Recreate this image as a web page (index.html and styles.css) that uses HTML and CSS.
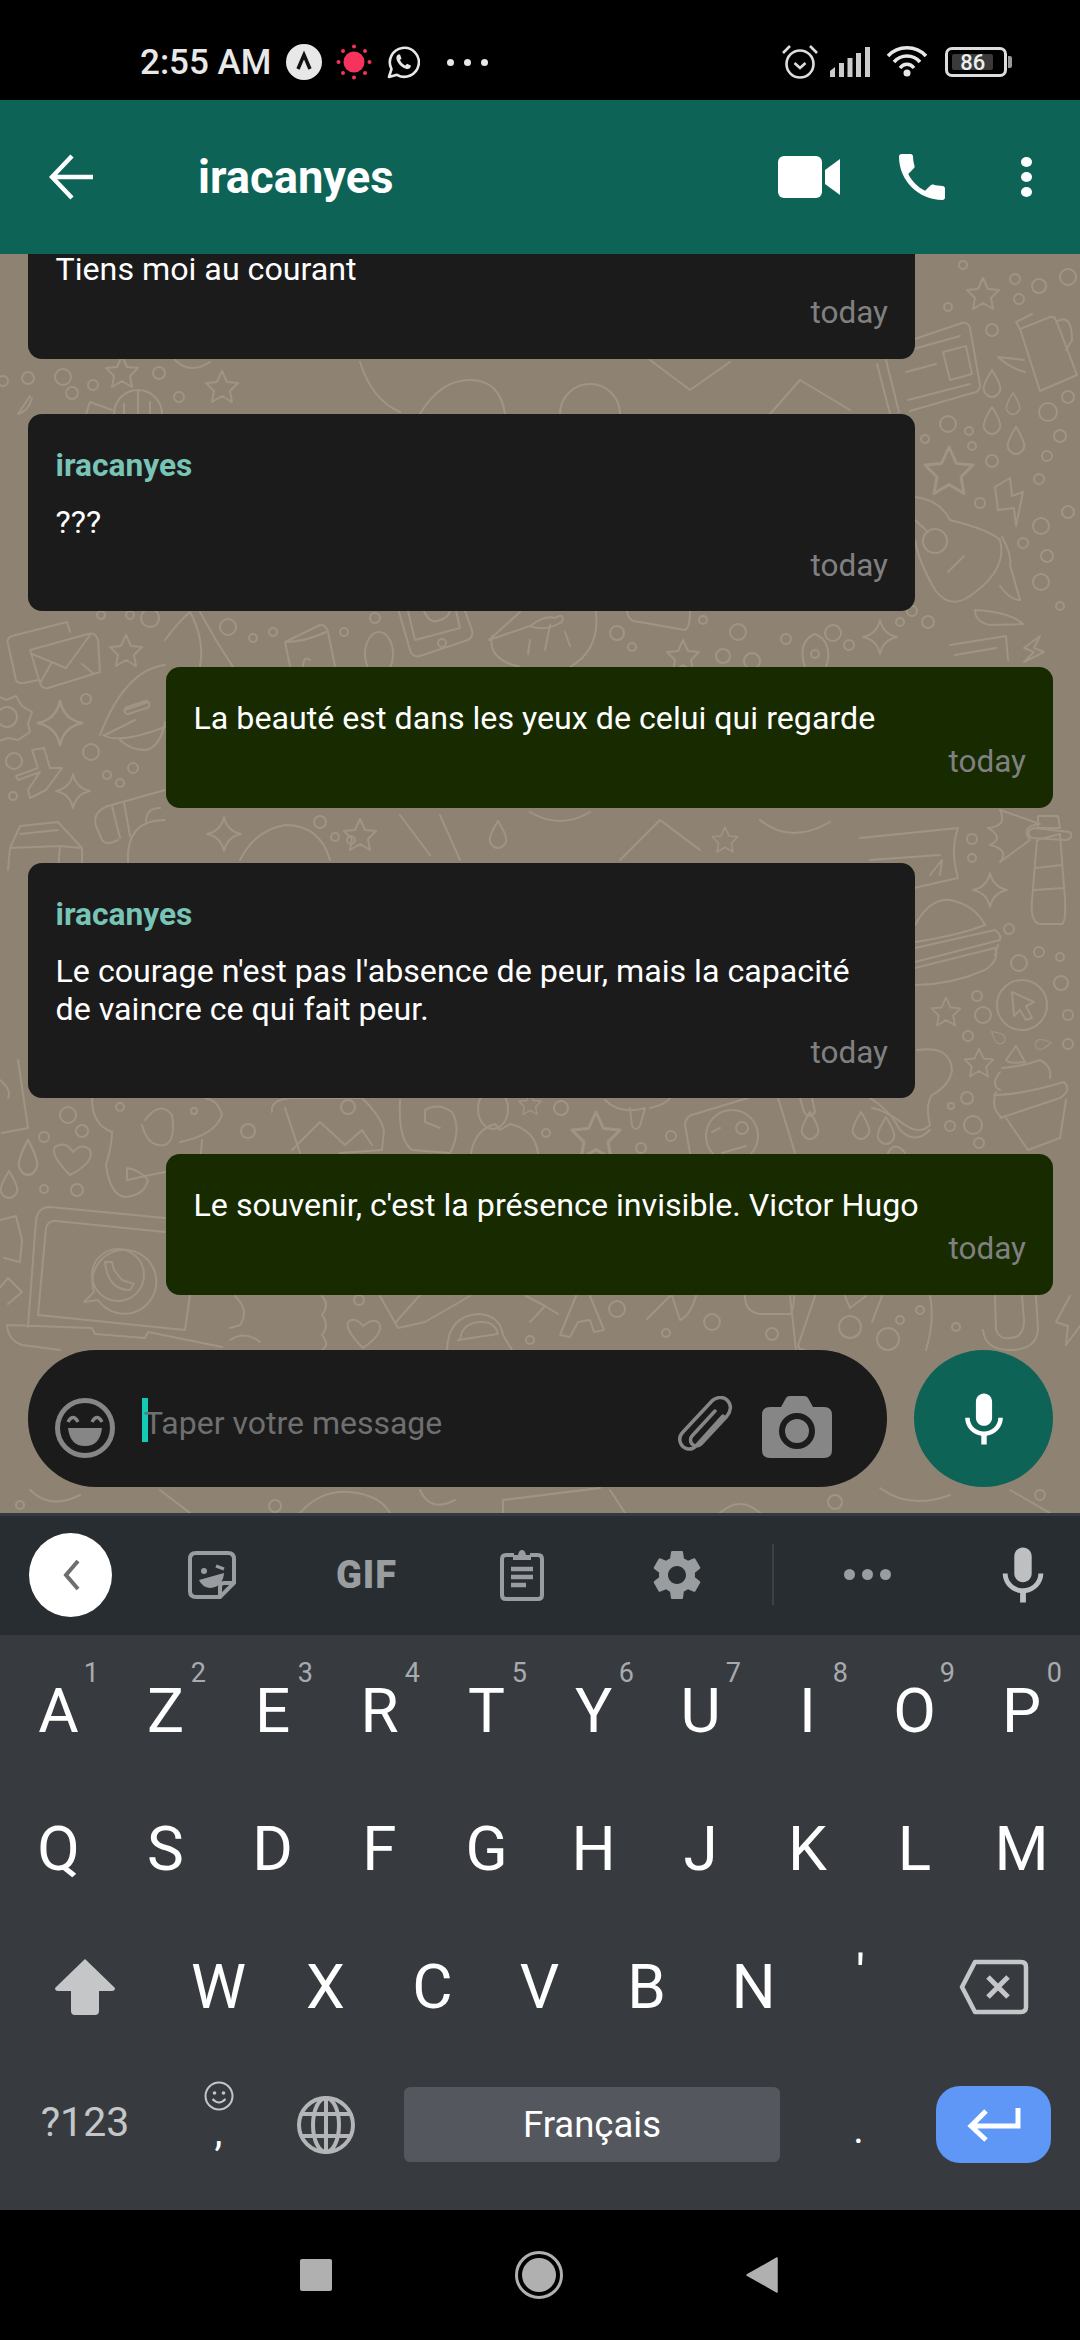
FILE: index.html
```html
<!DOCTYPE html>
<html lang="fr">
<head>
  <meta charset="UTF-8">
  <title>iracanyes</title>
  <link rel="stylesheet" href="styles.css">
</head>
<body>
  <!-- Status bar -->
  <div class="status-bar">
    <div class="status-left">
      <span class="clock">2:55 AM</span>
      <svg class="st-a" width="36" height="36" viewBox="0 0 36 36"><circle cx="18" cy="18" r="18" fill="#e8e8e8"/><path d="M12 25 L18 11 L24 25" fill="none" stroke="#111" stroke-width="3.5"/></svg>
      <svg class="st-sun" width="36" height="36" viewBox="0 0 36 36"><circle cx="18" cy="18" r="10.5" fill="#f5335c"/><g fill="#f5335c"><circle cx="18" cy="2.5" r="2"/><circle cx="18" cy="33.5" r="2"/><circle cx="2.5" cy="18" r="2"/><circle cx="33.500" cy="18" r="2"/><circle cx="7" cy="7" r="2"/><circle cx="29" cy="7" r="2"/><circle cx="7" cy="29" r="2"/><circle cx="29" cy="29" r="2"/></g></svg>
      <svg class="st-wa" width="34" height="34" viewBox="0 0 34 34"><path d="M3 32 L5.500 24 A14.500 14.500 0 1 1 11 29.800 Z" fill="none" stroke="#e8e8e8" stroke-width="2.600" stroke-linejoin="round"/><path d="M12 9.500 C10 11 9.800 14 12 17.500 C14.500 21.500 18.500 24 22 24 C24 23.800 25 22 24.800 20.500 L21 18.800 L19.300 20.500 C17 19.500 15 17.500 14 15 L15.500 13.500 L14 9.500 Z" fill="#e8e8e8"/></svg>
      <div class="st-dots"><i></i><i></i><i></i></div>
    </div>
    <div class="status-right">
      <svg width="38" height="36" viewBox="0 0 38 36"><circle cx="19" cy="20" r="13.500" fill="none" stroke="#ddd" stroke-width="2.600"/><path d="M13.500 19 L19 24 L24.500 19" fill="none" stroke="#ddd" stroke-width="2.600"/><path d="M2 9 L9 2 M36 9 L29 2" stroke="#ddd" stroke-width="2.600"/></svg>
      <svg class="st-signal" width="40" height="30" viewBox="0 0 40 30"><g fill="#ccc"><path d="M0 24 L5 20 V30 H0 Z"/><rect x="9" y="16" width="5" height="14"/><rect x="17.500" y="11" width="5" height="19"/><rect x="26" y="6" width="5" height="24"/><rect x="35" y="0" width="5" height="30"/></g></svg>
      <svg class="st-wifi" width="42" height="34" viewBox="0 0 42 34"><g fill="none" stroke="#e8e8e8" stroke-width="3.500"><path d="M2 11 C12 0 30 0 40 11"/><path d="M8 17 C15 9 27 9 34 17"/><path d="M14 23 C18 18 24 18 28 23"/></g><circle cx="21" cy="28" r="3.500" fill="#e8e8e8"/></svg>
      <div class="battery"><span class="battery-level"><span class="battery-text">86</span></span></div>
    </div>
  </div>

  <!-- Header -->
  <div class="header">
    <svg class="back-icon" width="46" height="46" viewBox="0 0 46 46"><path d="M44 23 H3 M23 2 L3 23 L23 44" fill="none" stroke="#fff" stroke-width="4.500"/></svg>
    <span class="title">iracanyes</span>
    <svg class="video-icon" width="62" height="42" viewBox="0 0 62 42"><rect width="44" height="42" rx="6" fill="#fff"/><path d="M47 14 L62 3 V39 L47 28 Z" fill="#fff"/></svg>
    <svg class="call-icon" width="46" height="46" viewBox="3 3 18 18"><path fill="#fff" d="M6.620 10.790c1.440 2.830 3.760 5.140 6.590 6.590l2.200-2.200c.27-.27.67-.36 1.020-.24 1.120.37 2.330.57 3.570.57.55 0 1 .45 1 1V20c0 .55-.45 1-1 1-9.390 0-17-7.610-17-17 0-.55.45-1 1-1h3.500c.55 0 1 .45 1 1 0 1.250.2 2.450.57 3.570.11.35.03.74-.25 1.020l-2.200 2.200z"/></svg>
    <div class="more-icon"><i></i><i></i><i></i></div>
  </div>

  <!-- Chat -->
  <div class="chat">
    <!-- wallpaper doodles, coordinates are page pixels -->
    <svg class="wallpaper" width="1080" height="1260" viewBox="0 254 1080 1260">
      <defs>
        <path id="star" d="M0 -16 L5 -5 L16 -4 L8 4 L10 15 L0 9 L-10 15 L-8 4 L-16 -4 L-5 -5 Z"/>
        <path id="drop" d="M0 -14 Q10 2 8 7 Q5 13 0 13 Q-5 13 -8 7 Q-10 2 0 -14 Z"/>
        <path id="spark" d="M0 -17 Q3 -3 17 0 Q3 3 0 17 Q-3 3 -17 0 Q-3 -3 0 -17 Z"/>
      </defs>
      <g fill="none" stroke="#a09585" stroke-width="2" stroke-linejoin="round" stroke-linecap="round">
        <!-- top right gutter -->
        <use href="#star" transform="translate(983 294)"/>
        <path d="M900 344 L962 323 Q968 322 970 328 L980 385 Q980 390 976 392 L910 411 M877 364 L890 414 M886 360 L899 412"/>
        <path d="M943 352 L966 346 L972 374 L950 380 Z M910 350 L960 336 M906 372 L936 364 M908 400 L970 384"/>
        <path d="M1020 329 L1050 317 Q1054 316 1056 320 L1077 375 L1040 391 Z M1020 329 L1016 322 L1032 314 M1056 322 Q1072 312 1072 340 L1066 350 M1025 372 Q1010 368 998 357 L1024 360"/>
        <use href="#drop" transform="translate(992 384)"/>
        <use href="#drop" transform="translate(1013 404) scale(.8)"/>
        <use href="#drop" transform="translate(992 421)"/>
        <use href="#drop" transform="translate(1016 441)"/>
        <use href="#star" transform="translate(949 471) scale(1.5)"/>
        <path d="M1010 478 L995 487 L998 510 L1014 508 L1016 526 L1023 492 L1012 496 Z"/>
        <path d="M915 497 Q940 500 950 520 Q990 530 1000 540 Q1008 570 970 596 Q950 610 935 590 Q918 560 915 540"/>
        <circle cx="935" cy="541" r="12"/>
        <path d="M948 572 L964 556 M915 520 L928 532 M1002 537 Q1012 555 1010 565 L1020 600 Q1010 600 1000 586 M975 610 Q1010 612 1023 624 L990 625 Q975 622 975 610"/>
        <use href="#spark" transform="translate(880 637)"/>
        <path d="M1040 636 L1024 648 L1034 652 L1024 662 L1044 652 L1034 648 Z"/>
        <path d="M950 645 L1006 636 L1008 660 M955 655 L996 648"/>
        <!-- middle right -->
        <path d="M860 838 L958 828 Q950 850 958 878 L914 888 M870 860 L940 855 M930 875 L942 860 L940 875"/>
        <path d="M1000 810 L1040 824 Q1020 826 1030 840 L1000 862 Q1010 850 990 845 Q1005 838 988 828 Q1008 826 1000 810 Z"/>
        <path d="M1037 840 L1032 900 Q1030 922 1040 924 H1062 Q1066 922 1065 900 L1060 834 Z M1032 838 Q1024 832 1034 828 L1070 832 Q1074 838 1066 840 Z M1038 816 H1058 L1060 828 H1038 Z M1036 868 L1062 865 M1034 890 L1064 888"/>
        <use href="#spark" transform="translate(990 890)"/>
        <path d="M915 925 Q930 898 950 900 Q975 905 985 925 Q960 935 915 942 M915 948 L995 930 Q1002 935 1000 940 L915 962 M998 945 L995 955 M915 968 L995 948 Q1000 960 985 970 Q950 985 915 985"/>
        <circle cx="1022" cy="1005" r="25"/>
        <path d="M1012 992 L1034 1002 L1026 1006 L1032 1018 L1026 1020 L1020 1010 L1014 1016 Z"/>
        <use href="#star" transform="translate(946 1012) scale(.9)"/>
        <use href="#star" transform="translate(979 1063) scale(.9)"/>
        <use href="#drop" transform="translate(998 1037) rotate(-50) scale(.6)"/>
        <use href="#drop" transform="translate(1043 1044) rotate(80) scale(.6)"/>
        <path d="M1016 1046 L1006 1060 Q1008 1064 1025 1062 Z M1002 1068 Q1024 1066 1040 1060 Q1052 1066 1050 1078 M1000 1072 Q990 1085 1000 1090 M994 1095 Q1020 1095 1064 1082 Q1072 1090 1060 1098 M1000 1118 L1060 1098 M1006 1118 L1028 1150 L1060 1138 L1066 1100 M996 1092 Q990 1108 1002 1118"/>
        <path d="M917 1050 Q950 1045 952 1070 Q950 1085 932 1095 Q925 1105 930 1125 Q920 1135 905 1125 Q885 1110 872 1108"/>
        <!-- left gutter, next to the outgoing bubble -->
        <path d="M32 654 L66 668 L90 635 M30 650 L88 634 Q96 632 98 640 L100 672 L48 688 Q42 689 40 683 Z M40 683 L52 662 M70 632 L67 622 L12 636 Q6 638 8 644 L16 680 Q18 684 24 683 L38 680 M82 664 L94 674"/>
        <use href="#star" transform="translate(126 651)"/>
        <circle cx="7" cy="717" r="10"/>
        <path d="M-5 695 L6 700 L16 696 L22 706 L32 712 L28 724 L30 732 L18 740 L8 738 L-4 742"/>
        <use href="#spark" transform="translate(60 723) scale(1.3)"/>
        <use href="#spark" transform="translate(73 791)"/>
        <path d="M32 750 L44 748 L50 768 L62 768 L46 790 L30 798 L28 790 L40 772 L18 780 L16 776 L38 768 Z"/>
        <path d="M100 735 Q125 670 165 665 M103 735 Q120 745 170 725 M105 735 L135 720 M125 710 L148 702 M120 740 Q130 750 145 750 Q160 748 165 722"/>
        <rect x="124" y="704" width="26" height="7" rx="3.500" transform="rotate(-18 137 708)"/>
        <path d="M165 790 L108 806 Q92 812 96 826 L102 840 Q106 846 118 840 M112 806 L120 838 M124 802 L130 836"/>
        <path d="M128 862 Q126 820 165 820 M146 822 Q146 808 160 808"/>
        <path d="M20 826 L58 822 L82 848 V870 M20 826 L10 848 L8 870 M10 848 L60 846 L82 848 M60 846 L58 870 M20 834 L58 830"/>
        <!-- left gutter lower, laptop and dog -->
        <path d="M18 1060 L28 1128 L2 1133 M0 1080 Q12 1090 8 1098"/>
        <use href="#drop" transform="translate(28 1158) scale(1.1 1.3)"/>
        <use href="#drop" transform="translate(9 1185)"/>
        <path d="M70 1175 Q50 1155 55 1147 Q65 1140 73 1152 Q82 1142 90 1150 Q95 1162 70 1175 Z"/>
        <path d="M92 1098 Q92 1125 112 1132 Q112 1145 106 1165 Q110 1195 125 1197 Q145 1195 148 1180 Q140 1170 127 1168 L127 1180 Q145 1176 165 1172 L200 1165 L202 1140"/>
        <path d="M145 1120 Q160 1100 172 1115 Q176 1140 165 1145 Q148 1148 142 1125 M180 1142 Q215 1135 222 1115 Q218 1100 205 1098"/>
        <path d="M28 1327 L36 1220 Q38 1207 50 1207 L165 1218 M38 1315 L46 1228 Q48 1220 56 1221 L165 1232 M38 1315 L185 1330 L190 1295 M7 1325 L92 1328 L95 1334 L145 1338 L148 1332 L222 1347 M7 1325 Q8 1340 22 1345 L60 1350"/>
        <path d="M84 1302 L94 1292 A32 32 0 1 1 98 1300 Z"/>
        <circle cx="118" cy="1275" r="26"/>
        <path d="M105 1262 Q108 1290 130 1290 L134 1284 L122 1280 L114 1270 L112 1262 Z"/>
        <path d="M0 1220 L16 1216 L22 1240 L20 1262 L4 1258 M-2 1290 L8 1278 L22 1292 L8 1304"/>
        <!-- gap under the first bubble -->
        <use href="#star" transform="translate(122 372)"/>
        <use href="#star" transform="translate(222 387)"/>
        <path d="M114 414 A24 24 0 0 1 162 414 M124 414 V404 M138 414 V391 M150 414 L150 402"/>
        <path d="M86 414 L90 402 L112 410 M18 414 L30 396 M32 398 Q28 412 18 414"/>
        <path d="M175 360 Q190 375 210 362 M360 362 Q372 400 400 412 M420 414 Q440 380 470 380 Q500 380 505 414 M560 414 A30 30 0 0 1 620 414 M650 360 L690 390 L730 362 M770 414 L800 380 L850 410"/>
        <!-- gap under second bubble -->
        <path d="M165 640 Q180 620 190 612 Q205 640 200 666 M200 612 Q215 640 233 667"/>
        <path d="M285 642 L320 625 Q326 624 328 632 L335 666 M285 642 L290 666 M285 642 Q305 642 326 632 M303 666 Q304 655 310 660"/>
        <ellipse cx="379" cy="654" rx="14" ry="22"/>
        <path d="M399 612 L410 650 Q412 658 420 656 L468 640 Q474 636 472 630 L465 611 M408 611 L415 640 L460 628 L456 611 M424 611 Q430 625 440 620 Q448 618 450 611"/>
        <circle cx="442" cy="643" r="4"/>
        <path d="M489 640 L520 612 M489 640 L530 626 Q545 615 555 618 Q565 612 562 622 Q545 632 530 626 M492 636 Q488 655 510 664 L520 667 M550 625 L545 650 M530 640 L528 654 M565 632 L570 646 M596 612 Q600 650 570 667"/>
        <path d="M627 611 Q628 622 640 622 L685 630 Q690 628 690 611"/>
        <use href="#star" transform="translate(683 656)"/>
        <path d="M815 634 Q830 640 828 660 L826 667 M815 634 Q800 640 803 660 L805 667"/>
        <circle cx="815" cy="654" r="4"/>
        <!-- gap under third bubble, rough -->
        <path d="M240 860 Q255 830 285 825 Q320 825 330 860 M400 815 L430 855 M440 815 L460 860 M530 812 Q560 830 590 812 M620 860 L660 820 L700 850 M760 820 Q790 845 830 822"/>
        <use href="#star" transform="translate(360 835)"/>
        <use href="#spark" transform="translate(224 834)"/>
        <use href="#drop" transform="translate(498 835)"/>
        <use href="#star" transform="translate(725 840) scale(.8)"/>
        <!-- gap under fourth bubble -->
        <path d="M272 1112 Q270 1100 290 1098 L362 1098 Q380 1115 384 1130 L382 1150 L340 1153 M285 1108 L300 1153 M292 1150 L320 1122 L345 1145 L362 1130 L372 1145"/>
        <path d="M400 1100 Q398 1140 412 1150 L450 1153 Q462 1130 452 1112 Q438 1102 425 1110 L425 1122 L440 1128"/>
        <ellipse cx="493" cy="1109" rx="15" ry="20"/>
        <path d="M471 1153 Q475 1130 495 1124 L500 1130 L510 1124 Q535 1130 538 1153"/>
        <use href="#star" transform="translate(596 1136) scale(1.5)"/>
        <use href="#star" transform="translate(530 1104) scale(.7)"/>
        <path d="M605 1100 Q620 1115 645 1108 L640 1126 Q636 1132 632 1126 L630 1108 M650 1108 Q665 1105 670 1098"/>
        <path d="M685 1125 L690 1153 M685 1125 Q685 1116 695 1114 L748 1098 M778 1098 L795 1153"/>
        <circle cx="732" cy="1136" r="26"/><circle cx="742" cy="1128" r="6"/>
        <path d="M712 1132 L720 1128 M722 1153 L746 1146"/>
        <path d="M800 1098 L804 1112 Q810 1120 815 1112 L812 1098"/>
        <use href="#drop" transform="translate(810 1126)"/>
        <use href="#drop" transform="translate(861 1126)"/>
        <use href="#drop" transform="translate(886 1131)"/>
        <path d="M870 1098 Q890 1110 900 1130 Q915 1145 930 1130"/>
        <path d="M888 1153 Q895 1140 905 1153"/>
        <!-- strip above the composer -->
        <path d="M322 1296 Q330 1305 322 1315 Q330 1325 322 1335 Q330 1345 322 1350"/>
        <path d="M363 1348 Q345 1330 348 1322 Q355 1316 363 1326 Q375 1316 380 1325 Q382 1335 363 1348 Z"/>
        <path d="M380 1296 L398 1328 L425 1322 L470 1296 M396 1322 L420 1295"/>
        <path d="M447 1350 Q448 1315 480 1314 Q500 1316 503 1335 L512 1350 M458 1340 L498 1334 M460 1340 Q462 1322 482 1322 Q495 1322 498 1334"/>
        <path d="M576 1296 L560 1335 L570 1337 L578 1322 L590 1320 L594 1332 L604 1330 L590 1296"/>
        <path d="M530 1322 L545 1306 L526 1296 M545 1306 L558 1314"/>
        <path d="M647 1319 L670 1296 M672 1296 L680 1320 Q690 1316 696 1296"/>
        <path d="M745 1296 Q745 1312 760 1314 L790 1314 Q794 1310 794 1296"/>
        <path d="M790 1296 L796 1350 M815 1296 L800 1340 Q795 1350 805 1350 M930 1296 Q935 1320 926 1350"/>
        <path d="M845 1296 L850 1308 L866 1296 M882 1296 L872 1322"/>
        <path d="M983 1330 Q985 1350 1010 1350 Q1036 1350 1038 1330 L1036 1296 M995 1296 L996 1330 Q1000 1340 1010 1338 Q1024 1338 1024 1320 L1022 1296"/>
        <path d="M1070 1296 L1056 1322 L1068 1326 L1066 1345 L1080 1326"/>
        <path d="M230 1340 Q245 1330 260 1342 M235 1296 Q250 1310 240 1325 L230 1328"/>
        <!-- strip under the composer -->
        <path d="M30 1490 Q50 1510 80 1495 M160 1490 L190 1513 M300 1513 Q320 1490 350 1492 Q380 1495 390 1513 M420 1490 Q430 1513 455 1500 M503 1513 V1500 L600 1488 M610 1490 L625 1513 M720 1513 Q740 1495 760 1513 M880 1488 Q910 1510 950 1495 M1010 1490 L1050 1513"/>
        <!-- dots -->
        <g>
          <circle cx="3" cy="381" r="5"/><circle cx="28" cy="378" r="6"/><circle cx="63" cy="377" r="8"/><circle cx="93" cy="385" r="5"/><circle cx="72" cy="393" r="6"/><circle cx="159" cy="373" r="6"/><circle cx="179" cy="397" r="5"/>
          <circle cx="963" cy="265" r="4"/><circle cx="1015" cy="279" r="5"/><circle cx="1039" cy="286" r="7"/><circle cx="1068" cy="277" r="8"/><circle cx="1019" cy="299" r="5"/><circle cx="948" cy="307" r="4"/><circle cx="992" cy="330" r="6"/>
          <circle cx="1068" cy="397" r="6"/><circle cx="1048" cy="412" r="9"/><circle cx="1060" cy="436" r="6"/><circle cx="948" cy="424" r="8"/><circle cx="969" cy="431" r="4"/><circle cx="972" cy="446" r="4"/><circle cx="925" cy="439" r="4"/><circle cx="992" cy="461" r="6"/><circle cx="1047" cy="456" r="5"/><circle cx="1039" cy="479" r="5"/><circle cx="980" cy="503" r="5"/><circle cx="1068" cy="512" r="6"/><circle cx="1041" cy="526" r="8"/><circle cx="1023" cy="543" r="5"/><circle cx="1047" cy="556" r="6"/><circle cx="1041" cy="582" r="8"/><circle cx="1060" cy="606" r="4"/><circle cx="900" cy="622" r="4"/><circle cx="928" cy="622" r="6"/><circle cx="912" cy="611" r="5"/>
          <circle cx="972" cy="839" r="5"/><circle cx="972" cy="858" r="4"/><circle cx="1009" cy="929" r="5"/><circle cx="1019" cy="963" r="8"/><circle cx="1039" cy="952" r="5"/><circle cx="1060" cy="957" r="4"/><circle cx="1061" cy="983" r="7"/><circle cx="1068" cy="1015" r="5"/><circle cx="1068" cy="1044" r="5"/><circle cx="977" cy="996" r="5"/><circle cx="983" cy="1015" r="8"/><circle cx="968" cy="1036" r="5"/><circle cx="967" cy="1098" r="6"/><circle cx="951" cy="1106" r="3"/><circle cx="973" cy="1125" r="9"/><circle cx="950" cy="1126" r="5"/><circle cx="979" cy="1143" r="5"/>
          <circle cx="101" cy="615" r="4"/><circle cx="130" cy="615" r="4"/><circle cx="150" cy="618" r="9"/><circle cx="228" cy="627" r="8"/><circle cx="253" cy="638" r="4"/><circle cx="273" cy="632" r="4"/><circle cx="344" cy="632" r="4"/><circle cx="375" cy="618" r="5"/><circle cx="617" cy="633" r="7"/><circle cx="632" cy="647" r="4"/><circle cx="703" cy="620" r="4"/><circle cx="738" cy="632" r="8"/><circle cx="786" cy="639" r="5"/><circle cx="833" cy="633" r="8"/><circle cx="849" cy="645" r="5"/><circle cx="723" cy="656" r="7"/><circle cx="752" cy="661" r="8"/>
          <circle cx="86" cy="699" r="5"/><circle cx="91" cy="752" r="8"/><circle cx="14" cy="761" r="8"/><circle cx="133" cy="768" r="5"/><circle cx="107" cy="775" r="4"/><circle cx="120" cy="783" r="4"/><circle cx="13" cy="796" r="4"/><circle cx="320" cy="822" r="6"/><circle cx="335" cy="837" r="4"/><circle cx="351" cy="840" r="4"/>
          <circle cx="68" cy="1115" r="8"/><circle cx="82" cy="1131" r="6"/><circle cx="44" cy="1137" r="5"/><circle cx="44" cy="1189" r="4"/><circle cx="77" cy="1190" r="6"/><circle cx="120" cy="1107" r="4"/><circle cx="194" cy="1111" r="3"/>
          <circle cx="248" cy="1131" r="7"/><circle cx="348" cy="1107" r="7"/><circle cx="561" cy="1108" r="7"/><circle cx="546" cy="1133" r="4"/><circle cx="671" cy="1136" r="5"/><circle cx="641" cy="1148" r="5"/>
          <circle cx="359" cy="1300" r="5"/><circle cx="617" cy="1309" r="8"/><circle cx="712" cy="1322" r="8"/><circle cx="666" cy="1333" r="4"/><circle cx="772" cy="1334" r="6"/><circle cx="850" cy="1327" r="11"/><circle cx="888" cy="1339" r="11"/><circle cx="956" cy="1327" r="4"/><circle cx="530" cy="1340" r="4"/><circle cx="900" cy="1320" r="4"/><circle cx="920" cy="1310" r="4"/>
          <circle cx="275" cy="1506" r="6"/><circle cx="20" cy="1505" r="4"/><circle cx="1040" cy="1495" r="5"/><circle cx="835" cy="1502" r="7"/>
        </g>
      </g>
    </svg>

    <div class="msg msg-in">
      <div class="msg-text">Tiens moi au courant</div>
      <div class="msg-time">today</div>
    </div>
    <div class="msg msg-in">
      <div class="msg-name">iracanyes</div>
      <div class="msg-text">???</div>
      <div class="msg-time">today</div>
    </div>
    <div class="msg msg-out">
      <div class="msg-text">La beauté est dans les yeux de celui qui regarde</div>
      <div class="msg-time">today</div>
    </div>
    <div class="msg msg-in">
      <div class="msg-name">iracanyes</div>
      <div class="msg-text">Le courage n'est pas l'absence de peur, mais la capacité de vaincre ce qui fait peur.</div>
      <div class="msg-time">today</div>
    </div>
    <div class="msg msg-out">
      <div class="msg-text">Le souvenir, c'est la présence invisible. Victor Hugo</div>
      <div class="msg-time">today</div>
    </div>

    <div class="composer">
      <div class="input-box">
        <svg class="emoji-icon" width="60" height="60" viewBox="0 0 60 60"><circle cx="30" cy="30" r="27.500" fill="none" stroke="#868686" stroke-width="5"/><path d="M13 24 Q18 15 23 24 M37 24 Q42 15 47 24" fill="none" stroke="#868686" stroke-width="3.500"/><path d="M13 30 H47 Q45 48 30 48 Q15 48 13 30 Z" fill="#868686"/></svg>
        <span class="cursor"></span>
        <span class="placeholder">Taper votre message</span>
        <svg class="clip-icon" width="56" height="62" viewBox="0 0 56 62"><path d="M46 20 L19 50 C13 56 6 52 4 48 C2 44 2 40 6 36 L34 6 C38 1 46 0 50 4 C55 9 54 15 50 20 L24 48 C21 51 17 50 15 48 C13 46 13 42 15 40 L38 15" fill="none" stroke="#868686" stroke-width="3.500" stroke-linecap="round"/></svg>
        <svg class="camera-icon" width="70" height="62" viewBox="0 0 70 62"><path fill="#868686" d="M8 11 H19 L24 2 Q25 0 28 0 H42 Q45 0 46 2 L51 11 H62 Q70 11 70 19 V54 Q70 62 62 62 H8 Q0 62 0 54 V19 Q0 11 8 11 Z"/><circle cx="35" cy="35" r="15" fill="none" stroke="#1c1c1c" stroke-width="6"/></svg>
      </div>
      <div class="mic-button">
        <svg width="62" height="62" viewBox="3 0 18 23"><path fill="#fff" d="M12 14c1.660 0 3-1.340 3-3V5c0-1.660-1.340-3-3-3S9 3.340 9 5v6c0 1.660 1.340 3 3 3zm5.300-3c0 3-2.540 5.100-5.300 5.100S6.700 14 6.700 11H5c0 3.410 2.720 6.230 6 6.720V21h2v-3.280c3.280-.48 6-3.300 6-6.720h-1.700z"/></svg>
      </div>
    </div>
  </div>

  <!-- Keyboard toolbar -->
  <div class="kb-toolbar">
    <div class="kb-back"><svg width="20" height="34" viewBox="0 0 20 34"><path d="M17 3 L5 17 L17 31" fill="none" stroke="#6e6e6e" stroke-width="4"/></svg></div>
    <div class="tool">
      <svg width="48" height="48" viewBox="0 0 48 48"><path d="M8 2 H40 Q46 2 46 8 V32 L32 46 H8 Q2 46 2 40 V8 Q2 2 8 2 Z M46 32 H36 Q32 32 32 36 V46" fill="none" stroke="#9a9da0" stroke-width="4"/><circle cx="16" cy="20" r="3" fill="#9a9da0"/><path d="M28 15 L36 18" stroke="#9a9da0" stroke-width="3"/><path d="M11 29 L36 22 Q35 36 22 37 Q14 36 11 29 Z" fill="#9a9da0"/></svg>
    </div>
    <div class="tool"><span class="gif">GIF</span></div>
    <div class="tool">
      <svg width="44" height="52" viewBox="0 0 44 52"><path d="M14 6 H6 Q2 6 2 10 V46 Q2 50 6 50 H38 Q42 50 42 46 V10 Q42 6 38 6 H30" fill="none" stroke="#9a9da0" stroke-width="4"/><path d="M13 11 V6 H18 Q19 1 22 1 Q25 1 26 6 H31 V11 Z" fill="#9a9da0"/><path d="M11 20 H33 M11 28 H33 M11 36 H26" stroke="#9a9da0" stroke-width="4.500"/></svg>
    </div>
    <div class="tool">
      <svg width="48" height="48" viewBox="2.400 2.400 19.200 19.200"><path fill="#9a9da0" d="M19.140 12.940c.04-.3.06-.61.06-.94 0-.32-.02-.64-.07-.94l2.030-1.580c.18-.14.23-.41.12-.61l-1.920-3.320c-.12-.22-.37-.29-.59-.22l-2.390.96c-.5-.38-1.030-.7-1.620-.94l-.36-2.540c-.04-.24-.24-.41-.48-.41h-3.840c-.24 0-.43.17-.47.41l-.36 2.540c-.59.24-1.130.57-1.620.94l-2.390-.96c-.22-.08-.47 0-.59.22L2.740 8.870c-.12.21-.08.47.12.61l2.030 1.580c-.05.3-.09.63-.09.94s.02.64.07.94l-2.030 1.580c-.18.14-.23.41-.12.61l1.920 3.320c.12.22.37.29.59.22l2.390-.96c.5.38 1.030.7 1.620.94l.36 2.540c.05.24.24.41.48.41h3.840c.24 0 .44-.17.47-.41l.36-2.540c.59-.24 1.130-.56 1.620-.94l2.390.96c.22.08.47 0 .59-.22l1.920-3.320c.12-.22.07-.47-.12-.61l-2.010-1.580zM12 15.600c-1.980 0-3.600-1.620-3.600-3.600s1.620-3.600 3.600-3.600 3.600 1.620 3.600 3.600-1.620 3.600-3.600 3.600z"/></svg>
    </div>
    <div class="kb-divider"></div>
    <div class="tool tool-dots"><i></i><i></i><i></i></div>
    <div class="tool tool-mic">
      <svg width="62" height="58" viewBox="3 1.500 18 20"><path fill="#bdbfc1" d="M12 14c1.660 0 3-1.340 3-3V5c0-1.660-1.340-3-3-3S9 3.340 9 5v6c0 1.660 1.340 3 3 3zm5.300-3c0 3-2.540 5.100-5.300 5.100S6.700 14 6.700 11H5c0 3.410 2.720 6.230 6 6.720V21h2v-3.280c3.280-.48 6-3.300 6-6.720h-1.700z"/></svg>
    </div>
  </div>

  <!-- Keyboard -->
  <div class="keyboard">
    <div class="kb-row">
      <div class="key">A<sup class="hint">1</sup></div>
      <div class="key">Z<sup class="hint">2</sup></div>
      <div class="key">E<sup class="hint">3</sup></div>
      <div class="key">R<sup class="hint">4</sup></div>
      <div class="key">T<sup class="hint">5</sup></div>
      <div class="key">Y<sup class="hint">6</sup></div>
      <div class="key">U<sup class="hint">7</sup></div>
      <div class="key">I<sup class="hint">8</sup></div>
      <div class="key">O<sup class="hint">9</sup></div>
      <div class="key">P<sup class="hint">0</sup></div>
    </div>
    <div class="kb-row">
      <div class="key">Q</div><div class="key">S</div><div class="key">D</div><div class="key">F</div><div class="key">G</div>
      <div class="key">H</div><div class="key">J</div><div class="key">K</div><div class="key">L</div><div class="key">M</div>
    </div>
    <div class="kb-row">
      <div class="key key-wide">
        <svg width="60" height="56" viewBox="0 0 60 56"><path fill="#c4c6c8" d="M30 0 L60 29 Q60 32 57 32 H44 V52 Q44 56 40 56 H20 Q16 56 16 52 V32 H3 Q0 32 0 29 Z"/></svg>
      </div>
      <div class="key">W</div><div class="key">X</div><div class="key">C</div><div class="key">V</div><div class="key">B</div><div class="key">N</div>
      <div class="key key-quote">'</div>
      <div class="key key-wide">
        <svg width="70" height="56" viewBox="0 0 70 56"><path d="M16 3 H62 Q67 3 67 8 V48 Q67 53 62 53 H16 L3 28 Z" fill="none" stroke="#c4c6c8" stroke-width="4.500" stroke-linejoin="round"/><path d="M29 18 L49 38 M49 18 L29 38" stroke="#c4c6c8" stroke-width="5"/></svg>
      </div>
    </div>
    <div class="kb-row">
      <div class="key key-wide key-sym">?123</div>
      <div class="key key-comma">
        <svg width="30" height="30" viewBox="0 0 30 30"><circle cx="15" cy="15" r="13.500" fill="none" stroke="#c4c6c8" stroke-width="2"/><circle cx="10.500" cy="12" r="1.800" fill="#c4c6c8"/><circle cx="19.500" cy="12" r="1.800" fill="#c4c6c8"/><path d="M8.500 18 Q15 25 21.500 18" fill="none" stroke="#c4c6c8" stroke-width="2"/></svg>
        <span class="comma">,</span>
      </div>
      <div class="key">
        <svg width="60" height="60" viewBox="0 0 60 60"><g fill="none" stroke="#b3b5b7" stroke-width="4"><circle cx="30" cy="30" r="27"/><ellipse cx="30" cy="30" rx="13" ry="27"/><path d="M30 3 V57 M6 19 H54 M6 41 H54"/></g></svg>
      </div>
      <div class="key key-space-wrap"><div class="space-bar">Français</div></div>
      <div class="key key-period">.</div>
      <div class="key key-wide">
        <div class="enter-key">
          <svg width="54" height="34" viewBox="0 0 54 34"><path d="M51 0 V18 H5 M19 3 L4 18 L19 32" fill="none" stroke="#fff" stroke-width="5"/></svg>
        </div>
      </div>
    </div>
  </div>

  <!-- Navigation bar -->
  <div class="nav-bar">
    <div class="nav-square"></div>
    <svg width="48" height="48" viewBox="0 0 48 48"><circle cx="24" cy="24" r="22.500" fill="none" stroke="#b0b0b0" stroke-width="3"/><circle cx="24" cy="24" r="17" fill="#b0b0b0"/></svg>
    <svg width="32" height="36" viewBox="0 0 32 36"><path d="M31 1 V35 L1 18 Z" fill="#b0b0b0" stroke="#b0b0b0" stroke-width="1.500" stroke-linejoin="round"/></svg>
  </div>
</body>
</html>
```

FILE: styles.css
```css
/* Basic reset */
* {
  box-sizing: border-box;
  margin: 0;
  padding: 0;
}

html, body {
  width: 1080px;
  height: 2340px;
  overflow: hidden;
}

body {
  display: flex;
  flex-direction: column;
  background-color: #000;
  font-family: Roboto, Arial, sans-serif;
  color: #fff;
}

/* Status bar */
.status-bar {
  height: 100px;
  flex: none;
  display: flex;
  justify-content: space-between;
  align-items: center;
  padding: 24px 69px 0 140px;
  background-color: #000;
  color: #e8e8e8;
}

.status-left, .status-right {
  display: flex;
  align-items: center;
}

.clock {
  width: 146px;
  font-size: 35px;
  font-weight: 500;
  white-space: nowrap;
}

.st-sun {
  margin-left: 14px;
}

.st-wa {
  margin-left: 14px;
}

.st-dots {
  display: flex;
  gap: 10px;
  margin-left: 27px;
}

.st-dots i {
  width: 7px;
  height: 7px;
  border-radius: 50%;
  background-color: #e8e8e8;
}

.st-signal {
  margin-left: 11px;
}

.st-wifi {
  margin-left: 16px;
}

.battery {
  position: relative;
  width: 62px;
  height: 30px;
  padding: 4px;
  margin: 0 4px 0 17px;
  border: 3px solid #ddd;
  border-radius: 7px;
}

.battery::after {
  content: "";
  position: absolute;
  right: -8px;
  top: 6px;
  width: 4px;
  height: 12px;
  background-color: #999;
  border-radius: 0 2px 2px 0;
}

.battery-level {
  display: flex;
  align-items: center;
  justify-content: center;
  width: 86%;
  height: 100%;
  background-color: #3a3a3a;
  border-radius: 2px;
}

.battery-text {
  font-size: 22px;
  font-weight: 500;
  color: #eee;
}

/* Header */
.header {
  height: 154px;
  flex: none;
  display: flex;
  align-items: center;
  background-color: #0e6357;
  z-index: 1;
}

.back-icon {
  margin-left: 49px;
}

.title {
  width: 580px;
  margin-left: 103px;
  font-size: 45.3px;
  font-weight: 700;
}

.call-icon {
  margin-left: 59px;
}

.more-icon {
  display: flex;
  flex-direction: column;
  gap: 5px;
  margin-left: 76px;
}

.more-icon i {
  width: 11px;
  height: 10px;
  border-radius: 50%;
  background-color: #fff;
}

/* Chat */
.chat {
  position: relative;
  flex: 1;
  min-height: 0;
  display: flex;
  flex-direction: column;
  justify-content: flex-end;
  padding: 0 27px 26px 28px;
  overflow: hidden;
  background-color: #8e8272;
}

.wallpaper {
  position: absolute;
  left: 0;
  top: 0;
}

.msg {
  position: relative;
  flex: none;
  width: 887px;
  margin-bottom: 55.5px;
  padding: 32.5px 27px 26.5px 27.5px;
  border-radius: 14px;
}

.msg-in {
  background-color: #1b1b1b;
  align-self: flex-start;
}

.msg-out {
  background-color: #172a00;
  align-self: flex-end;
}

.msg-name {
  margin-bottom: 18px;
  font-size: 31.7px;
  line-height: 38px;
  font-weight: 700;
  color: #78c4b6;
}

.msg-text {
  font-size: 32.2px;
  line-height: 38px;
  color: #fff;
}

.msg-time {
  margin-top: 5px;
  font-size: 31.5px;
  line-height: 39px;
  text-align: right;
  color: #808080;
}

.composer {
  position: relative;
  flex: none;
  display: flex;
  justify-content: space-between;
}

.input-box {
  width: 859px;
  height: 137px;
  display: flex;
  align-items: center;
  border-radius: 68px;
  background-color: #1b1b1b;
}

.emoji-icon {
  margin: 18px 0 0 27px;
}

.cursor {
  width: 6px;
  height: 44px;
  margin: 3px 0 0 27px;
  background-color: #14c9b6;
}

.placeholder {
  width: 530px;
  margin: 8px 0 0 -4px;
  font-size: 32px;
  color: #6f6f6f;
  position: relative;
}

.clip-icon {
  margin: 16px 0 0 3px;
}

.camera-icon {
  margin: 16px 0 0 29px;
}

.mic-button {
  width: 139px;
  height: 137px;
  display: flex;
  align-items: center;
  justify-content: center;
  border-radius: 50%;
  background-color: #0e6357;
}

/* Keyboard toolbar */
.kb-toolbar {
  height: 122px;
  flex: none;
  display: flex;
  align-items: center;
  padding: 0 0 2px 29px;
  border-top: 3px solid #333a40;
  background-color: #282d32;
}

.kb-back {
  width: 83px;
  height: 84px;
  margin-right: 22px;
  display: flex;
  align-items: center;
  justify-content: center;
  border-radius: 50%;
  background-color: #fff;
}

.tool {
  width: 155px;
  flex: none;
  display: flex;
  align-items: center;
  justify-content: center;
}

.gif {
  font-size: 38px;
  font-weight: 900;
  letter-spacing: 1px;
  color: #9a9da0;
}

.kb-divider {
  width: 2px;
  height: 61px;
  margin: 0 16px 0 18px;
  background-color: #3c4146;
}

.tool-dots {
  gap: 7px;
}

.tool-dots i {
  width: 11px;
  height: 11px;
  border-radius: 50%;
  background-color: #9a9da0;
}

.tool-mic {
  width: 115px;
  margin-left: 20px;
}

/* Keyboard */
.keyboard {
  height: 575px;
  flex: none;
  display: flex;
  flex-direction: column;
  padding: 6px 6px 16px 5px;
  background-color: #373b40;
}

.kb-row {
  height: 138.250px;
  flex: none;
  display: flex;
}

.key {
  position: relative;
  width: 107px;
  flex: none;
  display: flex;
  align-items: center;
  justify-content: center;
  font-size: 62px;
  color: #fff;
}

.hint {
  position: absolute;
  top: 16px;
  right: 13px;
  font-size: 27px;
  line-height: 32px;
  color: #a8abae;
}

.key-wide {
  width: 160px;
}

.key-quote {
  font-size: 54px;
  padding-bottom: 24px;
}

.key-sym {
  font-size: 41px;
  padding-bottom: 6px;
  color: #c4c6c8;
}

.key-comma {
  flex-direction: column;
  font-size: 40px;
  color: #c4c6c8;
  padding-bottom: 18px;
}

.comma {
  height: 40px;
  line-height: 42px;
  color: #fff;
}

.key-space-wrap {
  width: 426px;
}

.space-bar {
  width: 376px;
  height: 75px;
  display: flex;
  align-items: center;
  justify-content: center;
  border-radius: 6px;
  background-color: #54575d;
  font-size: 36.5px;
  color: #fff;
}

.key-period {
  font-size: 40px;
  padding-top: 10px;
}

.enter-key {
  width: 115px;
  height: 77px;
  margin-left: 3px;
  display: flex;
  align-items: center;
  justify-content: center;
  border-radius: 24px;
  background-color: #5e97f6;
}

/* Navigation bar */
.nav-bar {
  height: 130px;
  flex: none;
  display: flex;
  align-items: center;
  gap: 183px;
  padding-left: 300px;
  background-color: #000;
}

.nav-square {
  width: 32px;
  height: 32px;
  border-radius: 2px;
  background-color: #b0b0b0;
}
```
